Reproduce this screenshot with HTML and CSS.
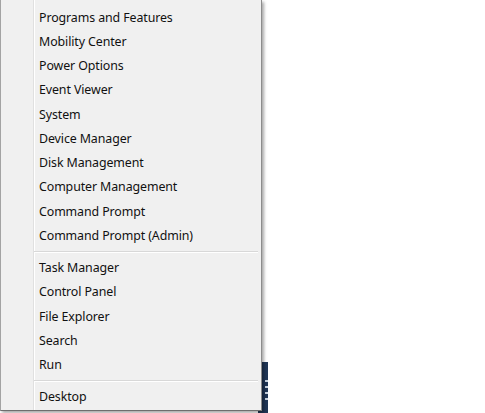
FILE: index.html
```html
<!DOCTYPE html>
<html>
<head>
<meta charset="utf-8">
<link rel="stylesheet" href="styles.css">
</head>
<body>
<div class="desk">
  <div class="taskbar"><span class="tick"></span><span class="tick"></span><span class="tick"></span><span class="tick"></span></div>
  <div class="menu">
    <div class="item">Programs and Features</div>
    <div class="item">Mobility Center</div>
    <div class="item">Power Options</div>
    <div class="item">Event Viewer</div>
    <div class="item">System</div>
    <div class="item">Device Manager</div>
    <div class="item">Disk Management</div>
    <div class="item">Computer Management</div>
    <div class="item">Command Prompt</div>
    <div class="item">Command Prompt (Admin)</div>
    <div class="sep"></div>
    <div class="item">Task Manager</div>
    <div class="item">Control Panel</div>
    <div class="item">File Explorer</div>
    <div class="item">Search</div>
    <div class="item">Run</div>
    <div class="sep"></div>
    <div class="item">Desktop</div>
  </div>
</div>
</body>
</html>
```
FILE: styles.css
```css
html, body {
  margin: 0;
  padding: 0;
  background: #ffffff;
}
.desk {
  position: relative;
  width: 485px;
  height: 413px;
  overflow: hidden;
}
.taskbar {
  position: absolute;
  left: 258px;
  top: 362px;
  width: 10px;
  height: 51px;
  background: #1f3555;
  display: flex;
  flex-direction: column;
  align-items: flex-end;
  gap: 4px;
  padding-top: 18px;
  box-sizing: border-box;
}
.tick {
  display: block;
  width: 3px;
  height: 2px;
  background: #c8d2de;
}
.menu {
  position: relative;
  width: 260px;
  padding-top: 5.5px;
  background-color: #f0f0f0;
  background-image: linear-gradient(to right, transparent 32px, #e0e0e0 32px, #e0e0e0 33px, #ffffff 33px, #ffffff 34px, transparent 34px);
  border-left: 1px solid #a3a3a3;
  border-right: 1px solid #8c8c8c;
  border-bottom: 1px solid #6e6e6e;
  box-shadow: 2px 2px 3px rgba(0, 0, 0, 0.35);
  font-family: "Noto Sans", "Open Sans", sans-serif;
  font-size: 12.4px;
  letter-spacing: -0.1px;
  color: #111111;
}
.item {
  height: 24.25px;
  line-height: 24.25px;
  padding-left: 38px;
  white-space: nowrap;
}
.sep {
  height: 8px;
  margin-left: 33px;
  margin-right: 3px;
  background: linear-gradient(to bottom, transparent 3px, #d8d8d8 3px, #d8d8d8 4px, #ffffff 4px, #ffffff 5px, transparent 5px);
}
```
